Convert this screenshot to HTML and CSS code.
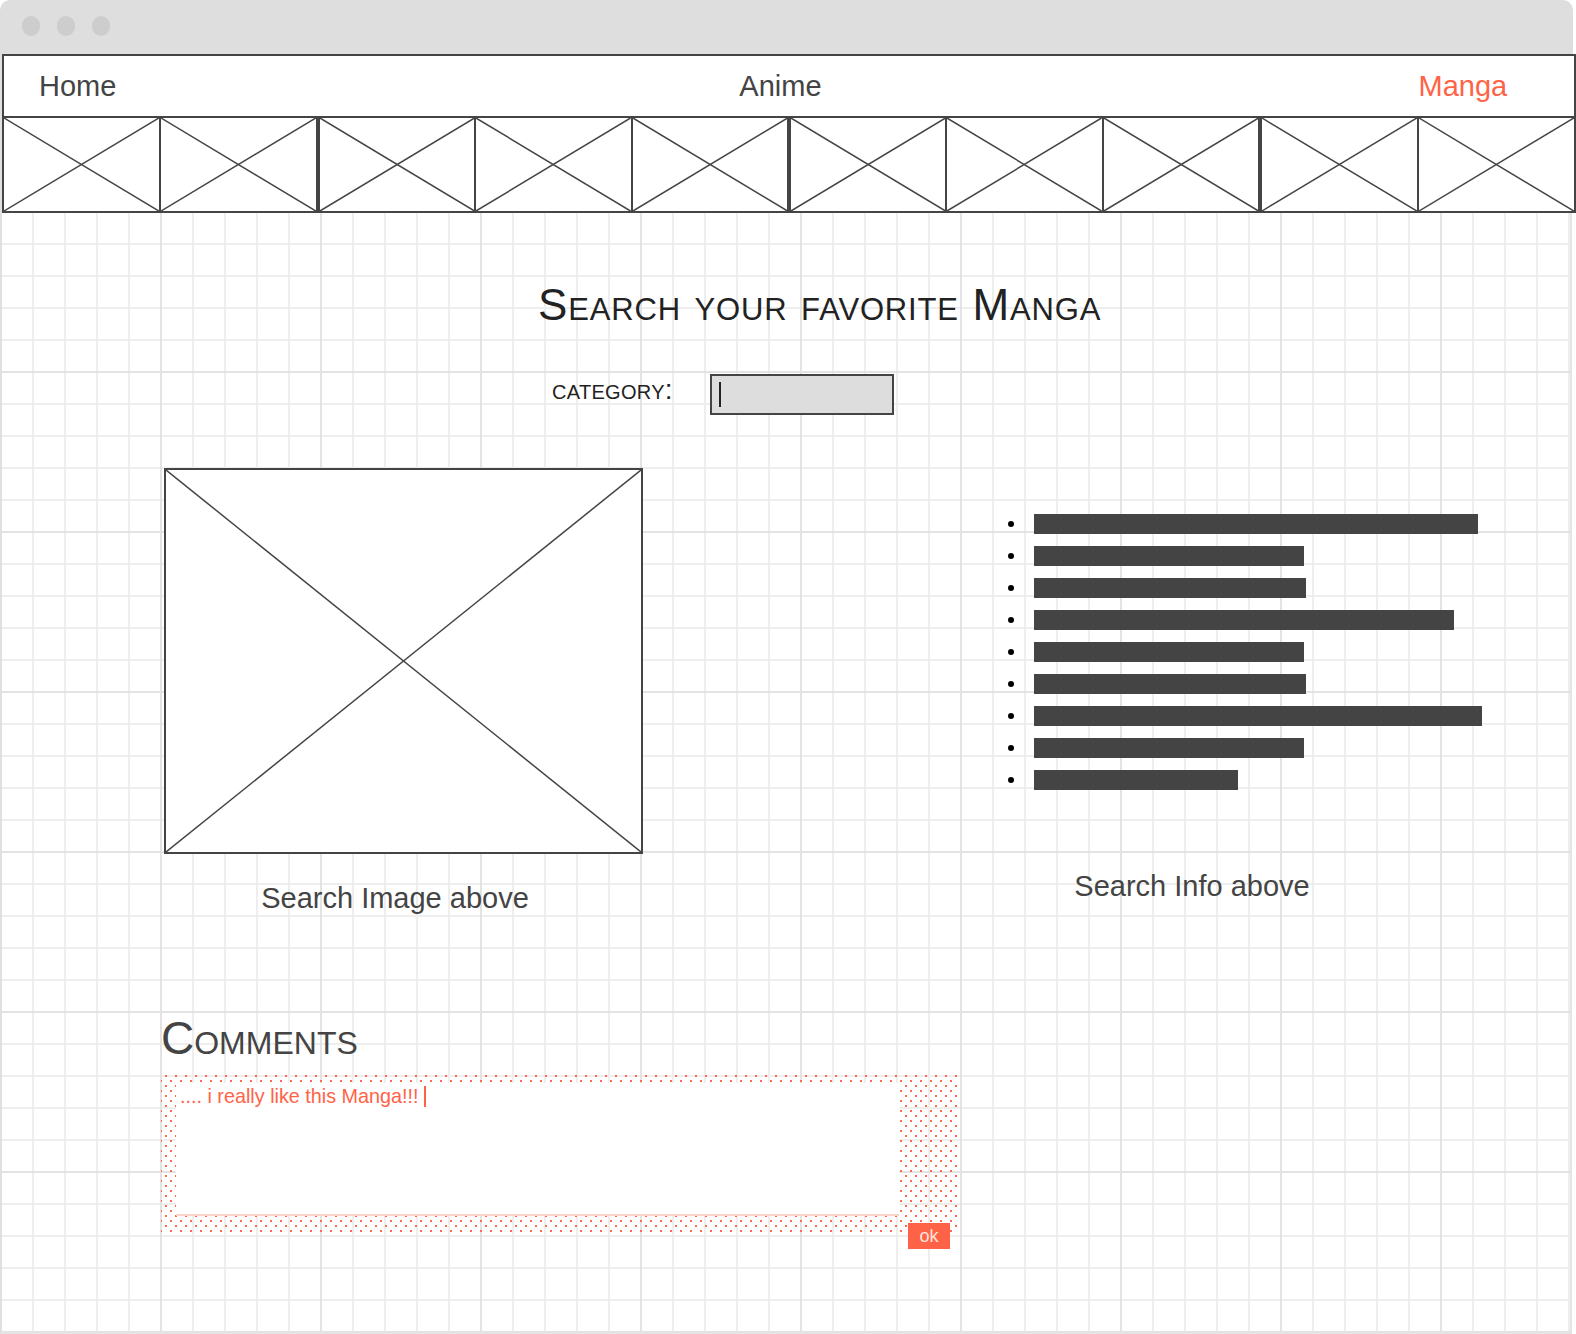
FILE: index.html
```html
<!DOCTYPE html>
<html lang="en">
<head>
<meta charset="utf-8">
<title>Manga search</title>
<link rel="stylesheet" href="styles.css">
</head>
<body>
<div class="titlebar">
  <span class="dot"></span><span class="dot"></span><span class="dot"></span>
</div>
<div class="frame">
  <nav class="nav">
    <a class="nav-link nav-home">Home</a>
    <a class="nav-link nav-anime">Anime</a>
    <a class="nav-link nav-manga">Manga</a>
  </nav>
  <div class="strip">
    <div class="group g2">
      <div class="cell"><svg class="x" viewBox="0 0 100 100" preserveAspectRatio="none"><line x1="0" y1="0" x2="100" y2="100"/><line x1="100" y1="0" x2="0" y2="100"/></svg></div>
      <div class="cell"><svg class="x" viewBox="0 0 100 100" preserveAspectRatio="none"><line x1="0" y1="0" x2="100" y2="100"/><line x1="100" y1="0" x2="0" y2="100"/></svg></div>
    </div>
    <div class="group g3">
      <div class="cell"><svg class="x" viewBox="0 0 100 100" preserveAspectRatio="none"><line x1="0" y1="0" x2="100" y2="100"/><line x1="100" y1="0" x2="0" y2="100"/></svg></div>
      <div class="cell"><svg class="x" viewBox="0 0 100 100" preserveAspectRatio="none"><line x1="0" y1="0" x2="100" y2="100"/><line x1="100" y1="0" x2="0" y2="100"/></svg></div>
      <div class="cell"><svg class="x" viewBox="0 0 100 100" preserveAspectRatio="none"><line x1="0" y1="0" x2="100" y2="100"/><line x1="100" y1="0" x2="0" y2="100"/></svg></div>
    </div>
    <div class="group g3">
      <div class="cell"><svg class="x" viewBox="0 0 100 100" preserveAspectRatio="none"><line x1="0" y1="0" x2="100" y2="100"/><line x1="100" y1="0" x2="0" y2="100"/></svg></div>
      <div class="cell"><svg class="x" viewBox="0 0 100 100" preserveAspectRatio="none"><line x1="0" y1="0" x2="100" y2="100"/><line x1="100" y1="0" x2="0" y2="100"/></svg></div>
      <div class="cell"><svg class="x" viewBox="0 0 100 100" preserveAspectRatio="none"><line x1="0" y1="0" x2="100" y2="100"/><line x1="100" y1="0" x2="0" y2="100"/></svg></div>
    </div>
    <div class="group g2">
      <div class="cell"><svg class="x" viewBox="0 0 100 100" preserveAspectRatio="none"><line x1="0" y1="0" x2="100" y2="100"/><line x1="100" y1="0" x2="0" y2="100"/></svg></div>
      <div class="cell"><svg class="x" viewBox="0 0 100 100" preserveAspectRatio="none"><line x1="0" y1="0" x2="100" y2="100"/><line x1="100" y1="0" x2="0" y2="100"/></svg></div>
    </div>
  </div>
  <main class="canvas">
    <h1 class="title">Search your favorite Manga</h1>
    <div class="category">
      <span class="cat-label">category:</span>
      <div class="cat-input"><span class="cat-caret"></span></div>
    </div>
    <div class="results">
      <div class="result-image">
        <div class="placeholder"><svg class="x" viewBox="0 0 100 100" preserveAspectRatio="none"><line x1="0" y1="0" x2="100" y2="100"/><line x1="100" y1="0" x2="0" y2="100"/></svg></div>
        <p class="caption caption-image">Search Image above</p>
      </div>
      <div class="result-info">
        <ul class="info-list">
          <li><span class="bar" style="width:444px"></span></li>
          <li><span class="bar" style="width:270px"></span></li>
          <li><span class="bar" style="width:272px"></span></li>
          <li><span class="bar" style="width:420px"></span></li>
          <li><span class="bar" style="width:270px"></span></li>
          <li><span class="bar" style="width:272px"></span></li>
          <li><span class="bar" style="width:448px"></span></li>
          <li><span class="bar" style="width:270px"></span></li>
          <li><span class="bar" style="width:204px"></span></li>
        </ul>
        <p class="caption caption-info">Search Info above</p>
      </div>
    </div>
    <section class="comments">
      <h2 class="comments-title">Comments</h2>
      <div class="comment-box">
        <div class="comment-field">
          <span class="comment-text">.... i really like this Manga!!!</span><span class="comment-caret"></span>
        </div>
        <button class="ok">ok</button>
      </div>
    </section>
  </main>
</div>
</body>
</html>
```
FILE: styles.css
```css
* { box-sizing: border-box; }

html, body {
  margin: 0;
  padding: 0;
  background: #ffffff;
}

body {
  width: 1576px;
  height: 1334px;
  overflow: hidden;
  font-family: "Liberation Sans", Arial, sans-serif;
}

/* window chrome */
.titlebar {
  width: 1573px;
  height: 54px;
  background: #dedede;
  border-radius: 10px 10px 0 0;
  display: flex;
  align-items: flex-start;
  gap: 17px;
  padding: 16px 0 0 22px;
}

.dot {
  width: 18px;
  height: 20px;
  border-radius: 9px;
  background: #cdcdcd;
}

.frame {
  border-left: 2px solid #e0e0e0;
}

/* navigation */
.nav {
  width: 1574px;
  height: 64px;
  border: 2px solid #444444;
  display: flex;
  align-items: center;
  padding-left: 35px;
  font-size: 29px;
  line-height: 29px;
  color: #444444;
}

.nav-link { display: block; }
.nav-anime { margin-left: 623px; }
.nav-manga { margin-left: 597px; color: #ff6347; }

/* image strip */
.strip {
  width: 1574px;
  height: 95px;
  display: flex;
}

.group {
  display: flex;
  border: 2px solid #444444;
  border-top: 0;
  flex-basis: 0;
}
.g2 { flex-grow: 2; }
.g3 { flex-grow: 3; }

.cell {
  flex: 1 1 0;
  border-left: 2px solid #444444;
}
.cell:first-child { border-left: 0; }

.x {
  display: block;
  width: 100%;
  height: 100%;
}
.x line {
  stroke: #444444;
  stroke-width: 1.5;
  vector-effect: non-scaling-stroke;
}

/* canvas with grid */
.canvas {
  display: block;
  width: 1570px;
  height: 1121px;
  border-right: 2px solid #e4e4e4;
  border-bottom: 2px solid #e4e4e4;
  padding-top: 70px;
  background-color: #ffffff;
  background-image:
    linear-gradient(to right, #e3e3e3 0, #e3e3e3 2px, transparent 2px),
    linear-gradient(to bottom, #e3e3e3 0, #e3e3e3 2px, transparent 2px),
    linear-gradient(to right, #eeeeee 0, #eeeeee 2px, transparent 2px),
    linear-gradient(to bottom, #eeeeee 0, #eeeeee 2px, transparent 2px);
  background-size: 160px 160px, 160px 160px, 32px 32px, 32px 32px;
  background-position: 158px 158px, 158px 158px, 30px 30px, 30px 30px;
}

.title {
  margin: 0 0 0 536px;
  height: 44px;
  font-size: 44px;
  line-height: 44px;
  font-weight: normal;
  font-variant: small-caps;
  letter-spacing: 0.85px;
  word-spacing: 0.5px;
  color: #222222;
  white-space: nowrap;
}

.category {
  display: flex;
  align-items: flex-start;
  margin: 47px 0 0 550px;
}

.cat-label {
  width: 158px;
  margin-top: 2px;
  font-size: 28px;
  line-height: 28px;
  font-variant: small-caps;
  letter-spacing: 0.3px;
  color: #222222;
}

.cat-input {
  width: 184px;
  height: 41px;
  border: 2px solid #444444;
  background: #dddddd;
  padding: 6px 0 0 7px;
}

.cat-caret {
  display: block;
  width: 2px;
  height: 25px;
  background: #222222;
}

/* results */
.results {
  display: flex;
  align-items: flex-start;
  margin: 53px 0 0 162px;
}

.result-image { width: 479px; }

.placeholder {
  height: 386px;
  border: 2px solid #444444;
  background: #ffffff;
}

.caption {
  margin: 0;
  font-size: 29px;
  line-height: 29px;
  color: #444444;
  text-align: center;
  white-space: nowrap;
}

.caption-image {
  margin-top: 30px;
  padding-right: 17px;
}

.result-info {
  width: 482px;
  margin-left: 357px;
}

.info-list {
  list-style: none;
  margin: 46px 0 0;
  padding: 0;
}

.info-list li {
  display: flex;
  align-items: center;
  height: 20px;
  margin-bottom: 12px;
}
.info-list li:last-child { margin-bottom: 0; }

.info-list li::before {
  content: "";
  width: 6px;
  height: 6px;
  border-radius: 50%;
  background: #000000;
  margin: 0 20px 0 8px;
  flex: none;
}

.bar {
  display: block;
  height: 20px;
  background: #444444;
  flex: none;
}

.caption-info {
  width: 384px;
  margin-top: 82px;
}

/* comments */
.comments {
  margin: 102px 0 0 159px;
}

.comments-title {
  margin: 0;
  height: 46px;
  font-size: 46px;
  line-height: 46px;
  font-weight: normal;
  font-variant: small-caps;
  color: #444444;
}

.comment-box {
  position: relative;
  width: 796px;
  margin-top: 14px;
  padding: 8px 58px 16px 15px;
  background-image:
    radial-gradient(circle at 5px 5px, #ff6a50 0, #ff6a50 0.8px, rgba(255,106,80,0) 1.4px),
    radial-gradient(circle at 5px 5px, #ff6a50 0, #ff6a50 0.8px, rgba(255,106,80,0) 1.4px);
  background-size: 10px 10px, 10px 10px;
  background-position: 5px 1px, 0 6px;
}

.comment-field {
  display: flex;
  align-items: flex-start;
  height: 133px;
  background: #ffffff;
  border-bottom: 2px solid #fcd3cb;
  padding: 4px 0 0 4px;
}

.comment-text {
  font-size: 19.8px;
  line-height: 19.5px;
  color: #ff6347;
  white-space: nowrap;
}

.comment-caret {
  display: block;
  width: 2px;
  height: 21px;
  margin: -1px 0 0 5px;
  background: #ff6347;
}

.ok {
  position: absolute;
  right: 7px;
  top: 148px;
  width: 42px;
  height: 26px;
  margin: 0;
  padding: 0;
  border: 0;
  border-radius: 0;
  background: #ff6347;
  color: #ffe3dc;
  font-family: "Liberation Sans", Arial, sans-serif;
  font-size: 18px;
  line-height: 26px;
  text-align: center;
}
```
